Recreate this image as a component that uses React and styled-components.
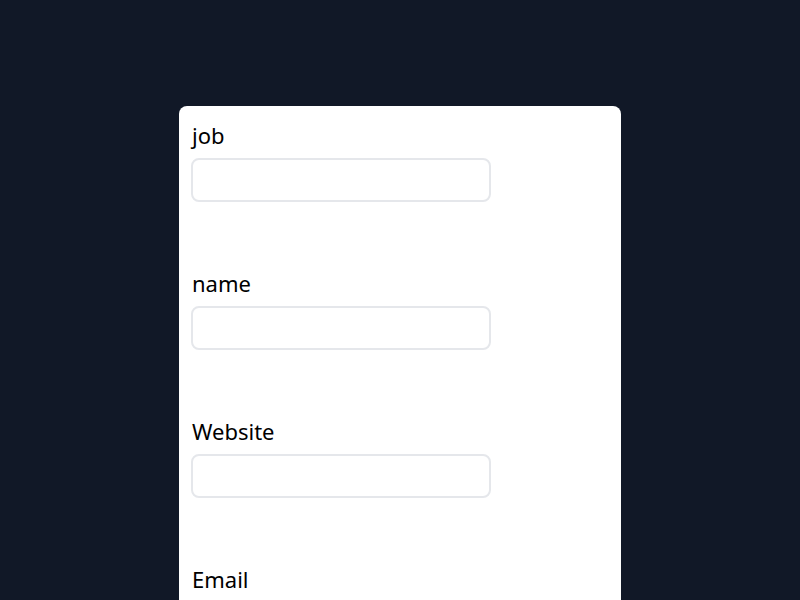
import React from "react";
import styled, { createGlobalStyle } from "styled-components";

const Global = createGlobalStyle`
  html, body { margin: 0; padding: 0; background: #111827; height: 100%; overflow: hidden; }
  body { font-family: "Noto Sans", "Open Sans", sans-serif; }
  * { box-sizing: border-box; }
`;

const Page = styled.div`
  display: flex;
  justify-content: center;
  padding-top: 106px;
`;

const Card = styled.form`
  width: 442px;
  background: #ffffff;
  border-radius: 8px;
  padding: 14px 12px 0;
  min-height: 600px;
  display: flex;
  flex-direction: column;
  gap: 66px;
`;

const Field = styled.div`
  display: flex;
  flex-direction: column;
  gap: 8px;
`;

const Label = styled.label`
  font-size: 22px;
  line-height: 30px;
  color: #000000;
  padding-left: 1px;
`;

const Input = styled.input`
  width: 300px;
  height: 44px;
  border: 2px solid #e5e7eb;
  border-radius: 8px;
  background: #fff;
  font: inherit;
  padding: 0 12px;
  outline: none;
`;

const fields = ["job", "name", "Website", "Email"];

export default function App() {
  return (
    <>
      <Global />
      <Page>
        <Card onSubmit={(e) => e.preventDefault()}>
          {fields.map((f) => (
            <Field key={f}>
              <Label htmlFor={f}>{f}</Label>
              <Input id={f} type="text" />
            </Field>
          ))}
        </Card>
      </Page>
    </>
  );
}
